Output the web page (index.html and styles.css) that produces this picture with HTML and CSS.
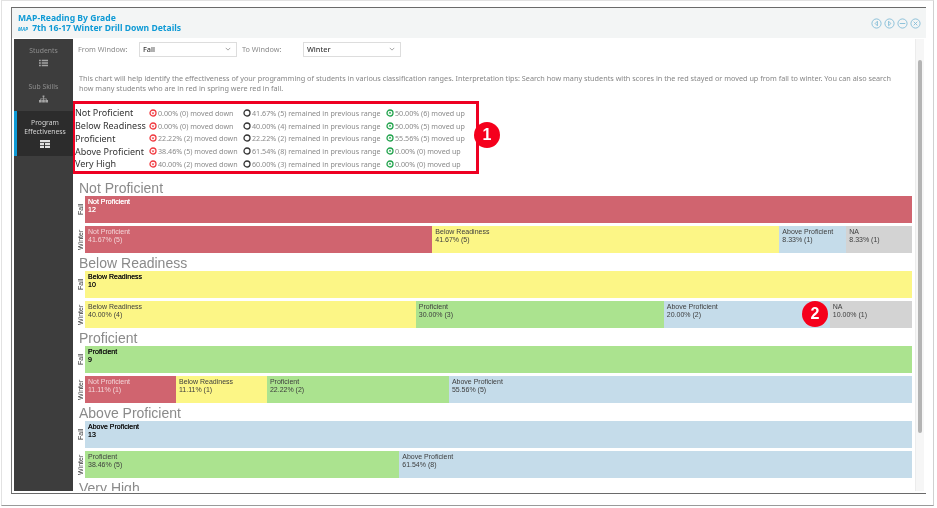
FILE: index.html
```html
<!DOCTYPE html>
<html lang="en">
<head>
<meta charset="utf-8">
<title>MAP-Reading By Grade</title>
<link rel="stylesheet" href="styles.css">
</head>
<body>
<svg class="defs" width="0" height="0">
  <symbol id="down" viewBox="0 0 8 8"><circle cx="4" cy="4" r="3" fill="none" stroke="currentColor" stroke-width="1.3"/><path d="M2.6 3.4h2.8L4 5.4z" fill="currentColor"/></symbol>
  <symbol id="same" viewBox="0 0 8 8"><circle cx="4" cy="4" r="3" fill="none" stroke="currentColor" stroke-width="1.3"/></symbol>
  <symbol id="up" viewBox="0 0 8 8"><circle cx="4" cy="4" r="3" fill="none" stroke="currentColor" stroke-width="1.3"/><path d="M2.6 4.6h2.8L4 2.6z" fill="currentColor"/></symbol>
</svg>
<div class="frame">
  <div class="modal">
    <header class="head">
      <div class="titles">
        <div class="title">MAP-Reading By Grade</div>
        <div class="title"><span class="logo">MAP</span>7th 16-17 Winter Drill Down Details</div>
      </div>
      <div class="winbtns">
        <svg viewBox="0 0 12 12"><circle cx="6" cy="6" r="5"/><path d="M7 3.5 4.5 6 7 8.5z"/></svg>
        <svg viewBox="0 0 12 12"><circle cx="6" cy="6" r="5"/><path d="M5 3.5 7.500 6 5 8.500z"/></svg>
        <svg viewBox="0 0 12 12"><circle cx="6" cy="6" r="5"/><path d="M3 6h6"/></svg>
        <svg viewBox="0 0 12 12"><circle cx="6" cy="6" r="5"/><path d="m4 4 4 4M8 4l-4 4"/></svg>
      </div>
    </header>
    <div class="body">
      <nav class="side">
        <div class="tab">Students
          <svg class="tabicon" viewBox="0 0 10 8"><path d="M0 .5h2v1.500H0zM3 .5h7v1.500H3zM0 3.200h2v1.600H0zM3 3.200h7v1.600H3zM0 6h2v1.500H0zM3 6h7v1.500H3z"/></svg>
        </div>
        <div class="tab">Sub Skills
          <svg class="tabicon" viewBox="0 0 10 8"><path d="M4 0h2v2H4zM4.600 2h.8v1.500H8.500V5h-.8V4.200H5.400V5h-.8V4.200H2.300V5h-.8V3.500h3.100zM0 5h3v3H0zM3.500 5h3v3h-3zM7 5h3v3H7z"/></svg>
        </div>
        <div class="tab active">Program<br>Effectiveness
          <svg class="tabicon big" viewBox="0 0 10 8"><path d="M0 0h10v2.200H0zM0 3h4v2H0zM5 3h5v2H5zM0 5.800h4V8H0zM5 5.800h5V8H5z"/></svg>
        </div>
      </nav>
      <main class="main">
        <div class="content">
          <div class="filters">
            <span class="flabel">From Window:</span>
            <div class="select">Fall<svg viewBox="0 0 8 5"><path d="m1 1 3 3 3-3"/></svg></div>
            <span class="flabel to">To Window:</span>
            <div class="select">Winter<svg viewBox="0 0 8 5"><path d="m1 1 3 3 3-3"/></svg></div>
          </div>
          <p class="intro">This chart will help identify the effectiveness of your programming of students in various classification ranges. Interpretation tips: Search how many students with scores in the red stayed or moved up from fall to winter. You can also search<br>how many students who are in red in spring were red in fall.</p>
          <div class="legend">
            <div class="lrow"><span class="lname">Not Proficient</span><span class="st s1"><svg class="r"><use href="#down"/></svg>0.00% (0) moved down</span><span class="st s2"><svg class="k"><use href="#same"/></svg>41.67% (5) remained in previous range</span><span class="st"><svg class="g"><use href="#up"/></svg>50.00% (6) moved up</span></div>
            <div class="lrow"><span class="lname">Below Readiness</span><span class="st s1"><svg class="r"><use href="#down"/></svg>0.00% (0) moved down</span><span class="st s2"><svg class="k"><use href="#same"/></svg>40.00% (4) remained in previous range</span><span class="st"><svg class="g"><use href="#up"/></svg>50.00% (5) moved up</span></div>
            <div class="lrow"><span class="lname">Proficient</span><span class="st s1"><svg class="r"><use href="#down"/></svg>22.22% (2) moved down</span><span class="st s2"><svg class="k"><use href="#same"/></svg>22.22% (2) remained in previous range</span><span class="st"><svg class="g"><use href="#up"/></svg>55.56% (5) moved up</span></div>
            <div class="lrow"><span class="lname">Above Proficient</span><span class="st s1"><svg class="r"><use href="#down"/></svg>38.46% (5) moved down</span><span class="st s2"><svg class="k"><use href="#same"/></svg>61.54% (8) remained in previous range</span><span class="st"><svg class="g"><use href="#up"/></svg>0.00% (0) moved up</span></div>
            <div class="lrow"><span class="lname">Very High</span><span class="st s1"><svg class="r"><use href="#down"/></svg>40.00% (2) moved down</span><span class="st s2"><svg class="k"><use href="#same"/></svg>60.00% (3) remained in previous range</span><span class="st"><svg class="g"><use href="#up"/></svg>0.00% (0) moved up</span></div>
            <span class="badge one">1</span>
          </div>

          <section class="group">
            <h2>Not Proficient</h2>
            <div class="row"><span class="rl">Fall</span><div class="bar"><div class="seg red strong" style="width:100%">Not Proficient<br>12</div></div></div>
            <div class="row"><span class="rl">Winter</span><div class="bar">
              <div class="seg red" style="width:42%">Not Proficient<br>41.67% (5)</div>
              <div class="seg yellow" style="width:41.96%">Below Readiness<br>41.67% (5)</div>
              <div class="seg blue" style="width:8.1%">Above Proficient<br>8.33% (1)</div>
              <div class="seg gray" style="width:7.94%">NA<br>8.33% (1)</div>
            </div></div>
          </section>
          <section class="group">
            <h2>Below Readiness</h2>
            <div class="row"><span class="rl">Fall</span><div class="bar"><div class="seg yellow strong" style="width:100%">Below Readiness<br>10</div></div></div>
            <div class="row"><span class="rl">Winter</span><div class="bar">
              <div class="seg yellow" style="width:40%">Below Readiness<br>40.00% (4)</div>
              <div class="seg green" style="width:29.99%">Proficient<br>30.00% (3)</div>
              <div class="seg blue" style="width:20.07%">Above Proficient<br>20.00% (2)</div>
              <div class="seg gray" style="width:9.94%">NA<br>10.00% (1)</div>
            </div></div>
            <span class="badge two">2</span>
          </section>
          <section class="group">
            <h2>Proficient</h2>
            <div class="row"><span class="rl">Fall</span><div class="bar"><div class="seg green strong" style="width:100%">Proficient<br>9</div></div></div>
            <div class="row"><span class="rl">Winter</span><div class="bar">
              <div class="seg red" style="width:11%">Not Proficient<br>11.11% (1)</div>
              <div class="seg yellow" style="width:11%">Below Readiness<br>11.11% (1)</div>
              <div class="seg green" style="width:22%">Proficient<br>22.22% (2)</div>
              <div class="seg blue" style="width:56%">Above Proficient<br>55.56% (5)</div>
            </div></div>
          </section>
          <section class="group">
            <h2>Above Proficient</h2>
            <div class="row"><span class="rl">Fall</span><div class="bar"><div class="seg blue strong" style="width:100%">Above Proficient<br>13</div></div></div>
            <div class="row"><span class="rl">Winter</span><div class="bar">
              <div class="seg green" style="width:38%">Proficient<br>38.46% (5)</div>
              <div class="seg blue" style="width:62%">Above Proficient<br>61.54% (8)</div>
            </div></div>
          </section>
          <section class="group">
            <h2>Very High</h2>
          </section>
        </div>
        <div class="track"><div class="thumb"></div></div>
      </main>
    </div>
  </div>
</div>
</body>
</html>
```
FILE: styles.css
```css
* { box-sizing: border-box; }
html, body { margin: 0; background: #fff; overflow: hidden; }
body { height: 508px; font-family: "DejaVu Sans", sans-serif; }
.defs { position: absolute; }

.frame {
  width: 933px; height: 506px; margin-left: 1px;
  border: 1px solid #e2e2e2; border-bottom: 1px solid #9a9a9a; border-right-color: #d0d0d0;
  padding: 6px 0 0 9px;
  filter: blur(.35px);
}
.modal {
  width: 915px; height: 487px; display: flex; flex-direction: column;
  border-top: 1px solid #6a6a6a; border-bottom: 1px solid #6a6a6a; border-left: 1px solid #777;
  background: #fff;
}
.head {
  height: 30px; flex: none; background: #f3f5f5; display: flex; align-items: center;
  justify-content: space-between; padding: 1px 5px 0 6px;
}
.title { font-family: "Noto Sans", sans-serif; font-weight: 700; font-size: 8.6px; line-height: 10px; color: #0f9ad5; white-space: nowrap; }
.logo { font-size: 4.500px; font-style: italic; margin-right: 4px; letter-spacing: .2px; }
.winbtns { display: flex; gap: 2px; }
.winbtns svg { width: 11px; height: 11px; fill: none; stroke: #84bdd8; stroke-width: 1; }

.body { flex: 1; display: flex; min-height: 0; padding: 1px 2px 2px 2px; }
.side { width: 59px; flex: none; background: #3d3d3d; }
.tab {
  height: 36px; padding-top: 7px; text-align: center; color: #8e8e8e; font-size: 6.800px; line-height: 9px;
  font-family: "Noto Sans", sans-serif;
}
.tab.active {
  height: 45px; padding-top: 7px; background: #2c2c2c; color: #d4d4d4;
  border-left: 3px solid #0f9ad5;
}
.tabicon { display: block; width: 9px; height: 8px; margin: 4px auto 0; fill: #a5a5a5; }
.tabicon.big { width: 10px; height: 8px; fill: #e0e0e0; }

.main { flex: 1; min-width: 0; display: flex; }
.content { flex: 1; min-width: 0; overflow: hidden; position: relative; }
.track { width: 9px; flex: none; background: #f6f6f6; padding: 21px 2px 0 2px; border-left: 1px solid #ececec; }
.thumb { height: 373px; background: #b4b4b4; border-radius: 3px; }

.filters {
  height: 18px; margin-top: 1px; padding-left: 5px; display: flex; align-items: center;
  font-family: "Noto Sans", sans-serif; font-size: 7.300px; color: #8a8a8a;
}
.flabel { width: 61px; }
.flabel.to { width: 61px; margin-left: 5px; }
.select {
  width: 98px; height: 15px; border: 1px solid #ddd; background: #fff; color: #3a3a3a;
  display: flex; align-items: center; justify-content: space-between; padding: 0 5px 0 3px; font-weight: 500;
}
.select svg { width: 6px; height: 4px; fill: none; stroke: #888; stroke-width: 1; }

.intro {
  margin: 15px 0 0 6px; font-family: "Noto Sans", sans-serif; font-size: 7.280px; line-height: 10.400px;
  color: #868686; white-space: nowrap;
}
.legend {
  position: relative; width: 407px; height: 73px; margin: 7px 0 0 -1px;
  border: 3px solid #ee0022; padding: 2.500px 0 0 0;
}
.lrow { height: 12.800px; display: flex; align-items: center; white-space: nowrap; font-family: "Noto Sans", sans-serif; font-size: 7.150px; color: #8a8a8a; }
.lname { width: 74px; font-size: 9px; color: #333; }
.st { display: flex; align-items: center; }
.st svg { width: 8px; height: 8px; margin-right: 1px; flex: none; }
.s1 { width: 94px; }
.s2 { width: 143px; }
.r { color: #f0393f; }
.k { color: #333; }
.g { color: #1ea24a; }

.badge {
  position: absolute; width: 26px; height: 26px; border-radius: 50%; background: #f5001c; color: #fff;
  font-family: "Liberation Sans", sans-serif; font-weight: 700; font-size: 16px; line-height: 26px; text-align: center;
}
.one { right: -24px; top: 18px; }
.two { left: 726px; top: 45px; }

.group { position: relative; height: 75px; margin-left: 3px; }
.legend + .group { margin-top: 7px; }
h2 {
  margin: 0 0 0 3px; height: 15px; font-family: "Liberation Sans", sans-serif; font-weight: 400; font-size: 14px; line-height: 14px;
  color: #8a8a8a; white-space: nowrap;
}
.row { display: flex; height: 27px; margin-bottom: 3px; }
.rl {
  width: 9px; flex: none; writing-mode: vertical-rl; transform: rotate(180deg); text-align: center;
  font-family: "Liberation Sans", sans-serif; font-size: 7px; line-height: 9px; color: #333;
}
.bar { width: 827px; display: flex; }
.seg {
  height: 27px; padding: 2px 0 0 3px; font-family: "Liberation Sans", sans-serif; font-size: 7px; line-height: 8px;
  color: #3d3d3d; white-space: nowrap; overflow: hidden;
}
.strong { color: #111; text-shadow: 0 0 .5px #111; }
.red { background: #d0646f; color: #f3d6d9; }
.red.strong { color: #fff; text-shadow: 0 0 .5px #fff; }
.yellow { background: #fcf686; }
.green { background: #abe38f; }
.blue { background: #c5dcea; }
.gray { background: #d3d3d3; }
```
